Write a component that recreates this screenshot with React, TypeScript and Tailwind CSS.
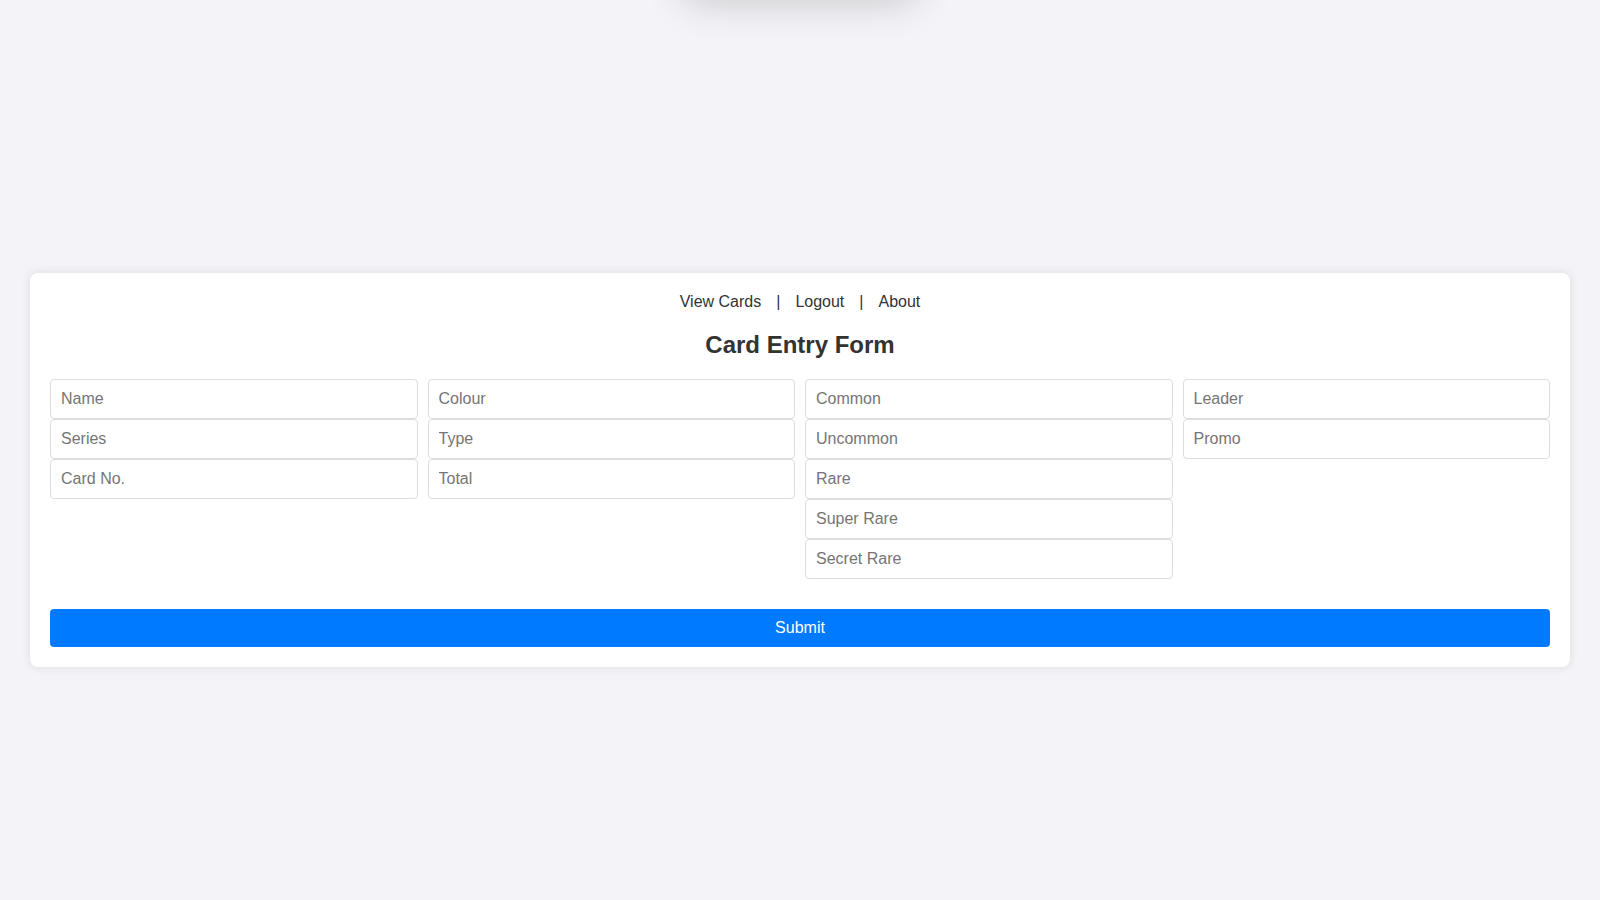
import React from 'react';

const columns: string[][] = [
  ['Name', 'Series', 'Card No.'],
  ['Colour', 'Type', 'Total'],
  ['Common', 'Uncommon', 'Rare', 'Super Rare', 'Secret Rare'],
  ['Leader', 'Promo'],
];

const App: React.FC = () => {
  return (
    <div
      className="relative min-h-screen overflow-hidden bg-[#f4f4f8] px-[30px] pt-[273px] text-[#333]"
      style={{ fontFamily: '"Liberation Sans", Arial, sans-serif' }}
    >
      {/* Notification sitting above the viewport, only its shadow shows */}
      <div className="absolute left-1/2 top-[-72px] h-[60px] w-[230px] -translate-x-1/2 rounded-lg bg-white shadow-[0_12px_40px_rgba(0,0,0,0.2)]" />

      <div className="rounded-lg bg-white p-5 shadow-[0_0_10px_rgba(0,0,0,0.1)]">
        {/* Nav */}
        <nav className="flex items-center justify-center gap-[15px] text-base leading-[18px]">
          <a href="#" className="text-[#333]">View Cards</a>
          <span>|</span>
          <a href="#" className="text-[#333]">Logout</a>
          <span>|</span>
          <a href="#" className="text-[#333]">About</a>
        </nav>

        <h2 className="mt-5 text-center text-2xl font-bold leading-7 text-[#333]">Card Entry Form</h2>

        {/* Inputs */}
        <form className="mt-5" onSubmit={(e) => e.preventDefault()}>
          <div className="grid grid-cols-4 items-start gap-[10px]">
            {columns.map((col, i) => (
              <div key={i} className="flex flex-col">
                {col.map((label) => (
                  <input
                    key={label}
                    type="text"
                    placeholder={label}
                    className="h-10 w-full rounded border border-[#ddd] bg-white px-[10px] text-base text-[#333] placeholder:text-[#757575] outline-none"
                  />
                ))}
              </div>
            ))}
          </div>

          <button
            type="submit"
            className="mt-[30px] h-[38px] w-full rounded bg-[#007bff] text-base text-white"
          >
            Submit
          </button>
        </form>
      </div>
    </div>
  );
};

export default App;
